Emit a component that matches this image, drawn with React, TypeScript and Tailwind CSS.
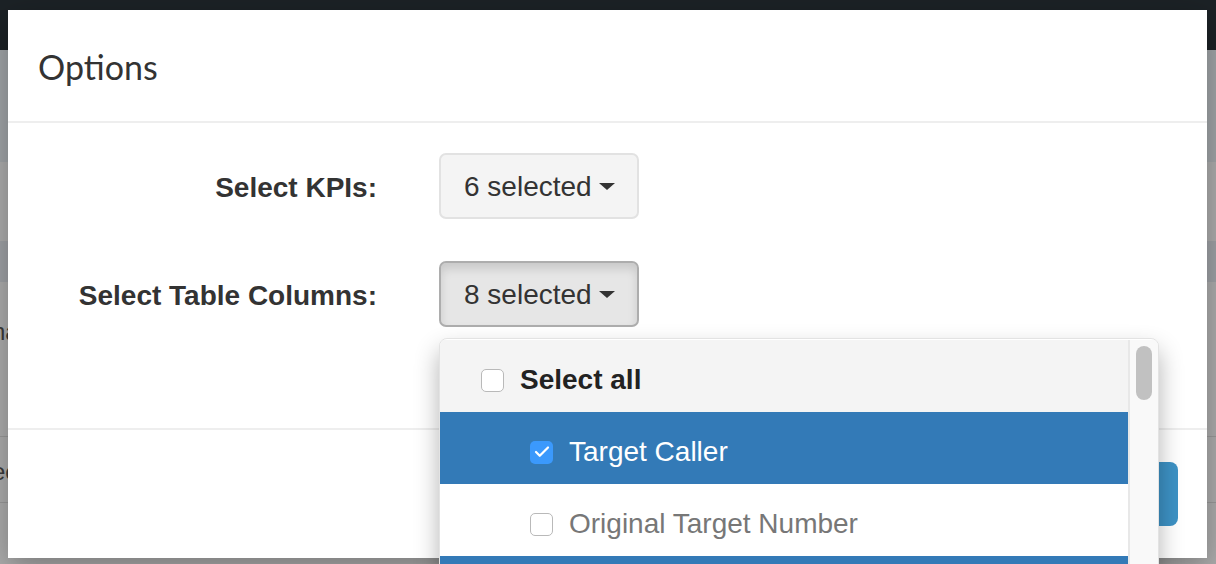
import { Check } from 'lucide-react';

type Column = {
  label: string;
  checked: boolean;
};

const columns: Column[] = [
  { label: 'Target Caller', checked: true },
  { label: 'Original Target Number', checked: false },
  { label: 'Inbound Number', checked: true },
];

function Caret() {
  return <span className="ml-[7px] inline-block h-0 w-0 border-x-[8px] border-t-[7px] border-x-transparent border-t-[#333]"></span>;
}

function Box({ checked }: { checked: boolean }) {
  return checked ? (
    <span className="flex h-[23px] w-[23px] shrink-0 items-center justify-center rounded-[5px] bg-[#3b99fc]">
      <Check className="h-[18px] w-[18px] text-white" strokeWidth={3} />
    </span>
  ) : (
    <span className="h-[23px] w-[23px] shrink-0 rounded-[5px] border border-[#b9b9b9] bg-white"></span>
  );
}

export default function App() {
  return (
    <div className="relative h-[564px] w-[1216px] overflow-hidden bg-[#adadad] font-['Liberation_Sans',Arial,sans-serif] text-[#333]">
      {/* page behind the backdrop */}
      <div className="h-[50px] bg-[#1c2226]"></div>
      <div className="h-[112px] bg-[#a1a5a8]"></div>
      <div className="h-[79px]"></div>
      <div className="h-[41px] bg-[#9fa2a6]"></div>
      <div className="h-[154px] pt-[36px] text-[24px] leading-[28px] text-[#3a3a3a]">
        <span className="ml-[-8px]">na</span>
      </div>
      <div className="flex h-[66px] items-center border-t border-[#999] pt-[4px] text-[24px] text-[#3a3a3a]">
        <span className="ml-[-8px]">ee</span>
      </div>
      <div className="border-t border-[#999]"></div>

      {/* modal */}
      <div className="absolute left-[8px] top-[10px] flex h-[548px] w-[1199px] flex-col bg-white shadow-[0_10px_30px_rgba(0,0,0,0.3)]">
        <div className="flex h-[113px] shrink-0 items-center border-b-2 border-[#eeeeee] px-[30px] pt-[2px]">
          <h4 className="font-['Lato',sans-serif] text-[34px] text-[#333]">Options</h4>
        </div>

        <div className="flex h-[305px] shrink-0 flex-col gap-[42px] pt-[30px]">
          <div className="flex items-center">
            <label className="w-[369px] pt-[3px] text-right text-[28px] font-bold">Select KPIs:</label>
            <button
              type="button"
              className="ml-[62px] flex h-[66px] w-[200px] items-center whitespace-nowrap rounded-[7px] border-2 border-[#e2e2e2] bg-[#f4f4f4] px-[23px] pt-[1px] text-[28px]"
            >
              6 selected<Caret />
            </button>
          </div>

          <div className="flex items-center">
            <label className="w-[369px] pt-[3px] text-right text-[28px] font-bold">Select Table Columns:</label>
            <div className="relative ml-[62px]">
              <button
                type="button"
                className="flex h-[66px] w-[200px] items-center whitespace-nowrap rounded-[7px] border-2 border-[#adadad] bg-[#e6e6e6] px-[23px] pt-[1px] text-[28px] shadow-[inset_0_6px_10px_rgba(0,0,0,0.125)]"
              >
                8 selected<Caret />
              </button>

              <div className="absolute left-0 top-[77px] z-10 flex h-[260px] w-[720px] overflow-hidden rounded-t-[8px] border border-[#e3e3e3] bg-white pt-px shadow-[0_12px_24px_rgba(0,0,0,0.3)]">
                <ul className="flex-1">
                  <li className="flex h-[72px] items-center gap-[16px] bg-[#f4f4f4] pl-[41px] pt-[8px] text-[28px] font-bold text-[#222]">
                    <Box checked={false} />
                    Select all
                  </li>
                  {columns.map((column) => (
                    <li
                      key={column.label}
                      className={`flex h-[72px] items-center gap-[16px] pl-[90px] pt-[8px] text-[28px] ${
                        column.checked ? 'bg-[#337ab7] text-white' : 'bg-white text-[#777]'
                      }`}
                    >
                      <Box checked={column.checked} />
                      {column.label}
                    </li>
                  ))}
                </ul>
                <div className="w-[30px] border-l-2 border-[#e8e8e8] bg-[#f9f9f9] px-[6px] pt-[6px]">
                  <div className="h-[54px] w-[16px] rounded-full bg-[#c1c1c1]"></div>
                </div>
              </div>
            </div>
          </div>
        </div>

        <div className="flex flex-1 items-start justify-end border-t-2 border-[#eeeeee] px-[29px] pt-[32px]">
          <button type="button" className="h-[64px] w-[150px] rounded-[8px] bg-[#3d92c5] text-[28px] text-white">
            Apply
          </button>
        </div>
      </div>
    </div>
  );
}
